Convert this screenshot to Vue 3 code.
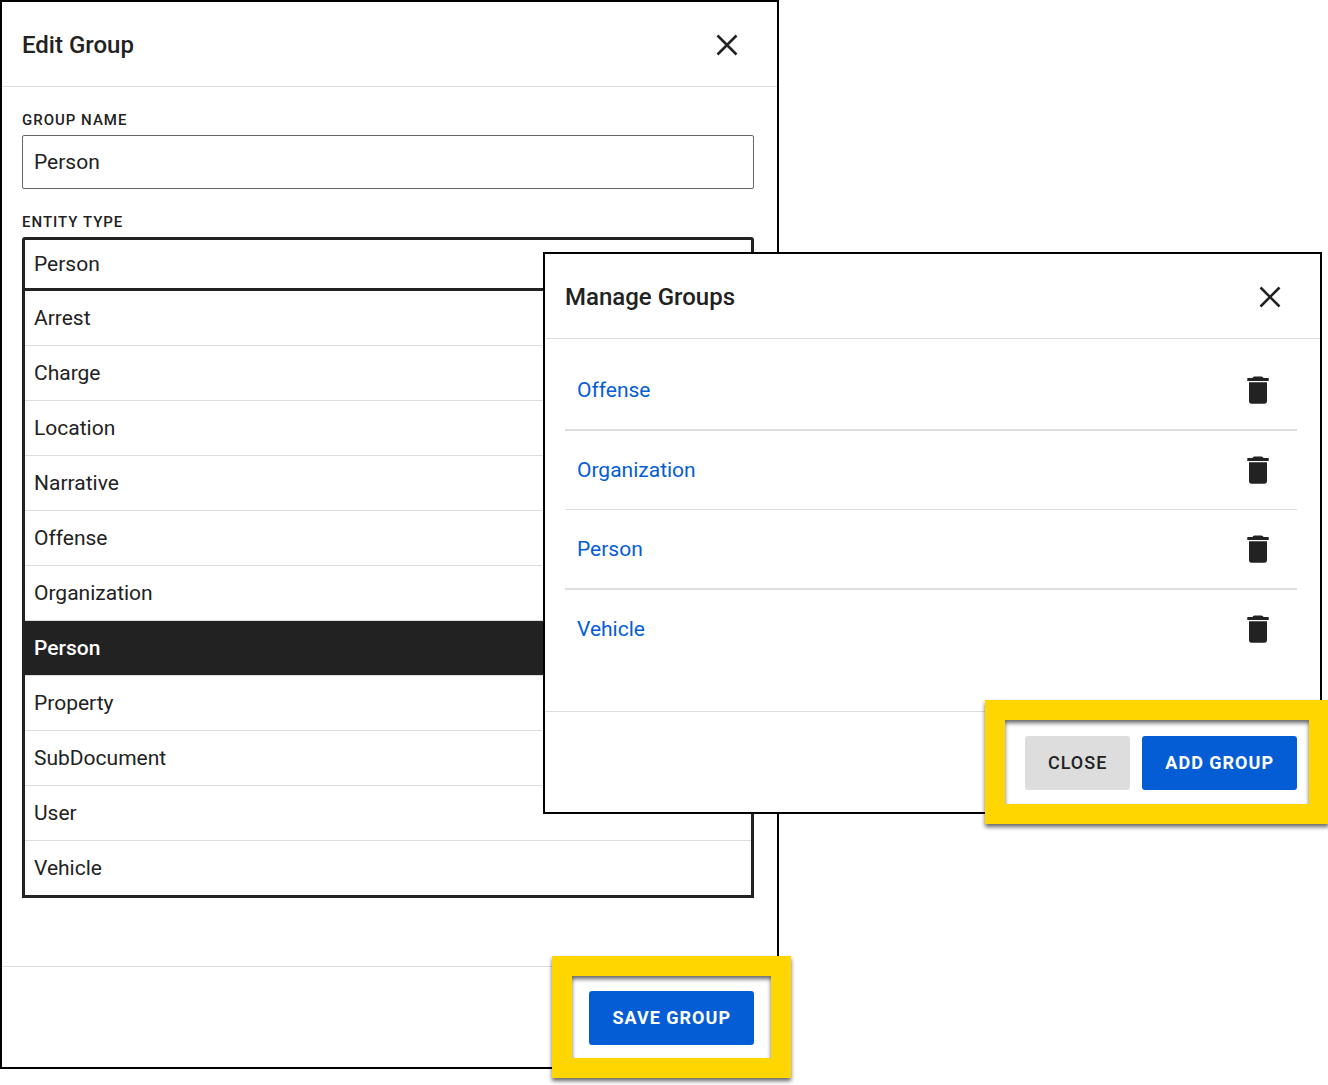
<script setup>
import { ref } from 'vue'

const groupName = ref('Person')
const entityType = ref('Person')
const entityTypes = [
  'Arrest', 'Charge', 'Location', 'Narrative', 'Offense', 'Organization',
  'Person', 'Property', 'SubDocument', 'User', 'Vehicle',
]
const groups = ['Offense', 'Organization', 'Person', 'Vehicle']
</script>

<template>
  <main class="stage">
    <section class="dialog edit" role="dialog" aria-labelledby="edit-title">
      <header class="head">
        <h2 id="edit-title">Edit Group</h2>
        <button class="icon-button" type="button" aria-label="Close">
          <svg width="22" height="22" viewBox="0 0 22 22"><path d="M1.5 1.5 20.5 20.5M20.5 1.5 1.5 20.5" /></svg>
        </button>
      </header>
      <form class="form" @submit.prevent>
        <label for="group-name">GROUP NAME</label>
        <input id="group-name" v-model="groupName" class="field" type="text" />
        <label for="entity-type">ENTITY TYPE</label>
        <select id="entity-type" v-model="entityType" class="field open">
          <option v-for="type in entityTypes" :key="type">{{ type }}</option>
        </select>
        <ul class="options">
          <li v-for="type in entityTypes" :key="type">
            <button
              type="button"
              :class="{ selected: type === entityType }"
              @click="entityType = type"
            >{{ type }}</button>
          </li>
        </ul>
      </form>
      <footer class="foot">
        <div class="actions save-actions">
          <button class="action primary" type="button">SAVE GROUP</button>
        </div>
      </footer>
    </section>

    <section class="dialog manage" role="dialog" aria-labelledby="manage-title">
      <header class="head">
        <h2 id="manage-title">Manage Groups</h2>
        <button class="icon-button" type="button" aria-label="Close">
          <svg width="22" height="22" viewBox="0 0 22 22"><path d="M1.5 1.5 20.5 20.5M20.5 1.5 1.5 20.5" /></svg>
        </button>
      </header>
      <ul class="groups">
        <li v-for="group in groups" :key="group">
          <a href="#">{{ group }}</a>
          <button class="icon-button" type="button" :aria-label="'Delete ' + group">
            <svg class="trash" width="22" height="28" viewBox="0 0 22 28">
              <path d="M6 1.2Q6.600.4 8 .4H14Q15.400.4 16 1.200L16.500 2H21.700V5H.3V2H5.500ZM2 6.300H20V25Q20 27.700 17.300 27.700H4.700Q2 27.700 2 25Z" />
            </svg>
          </button>
        </li>
      </ul>
      <footer class="foot">
        <div class="actions group-actions">
          <button class="action" type="button">CLOSE</button>
          <button class="action primary" type="button">ADD GROUP</button>
        </div>
      </footer>
    </section>
  </main>
</template>

<style>
body {
  margin: 0;
  background: #fff;
}
</style>

<style scoped>
.stage {
  position: relative;
  padding-bottom: 16px;
  overflow: hidden;
  color: #222;
  font-family: Roboto, "Liberation Sans", sans-serif;
  font-size: 21px;
}

.stage *,
.stage *::after {
  box-sizing: border-box;
}

button,
input,
select {
  color: inherit;
  font: inherit;
  letter-spacing: inherit;
}

button {
  padding: 0;
  border: 0;
  background: none;
  cursor: pointer;
}

ul {
  margin: 0;
  padding: 0;
  list-style: none;
}

.dialog {
  width: 58.66%;
  border: 2px solid #000;
  background: #fff;
}

.manage {
  position: absolute;
  top: 252px;
  right: 6px;
}

.head {
  display: flex;
  align-items: center;
  justify-content: space-between;
  height: 85px;
  padding: 2px 39px 0 20px;
  border-bottom: 1px solid #ddd;
}

h2 {
  margin: 0;
  font-size: 24px;
  font-weight: 500;
  line-height: 32px;
}

.icon-button {
  display: flex;
}

.icon-button path {
  fill: none;
  stroke: #222;
  stroke-width: 2.6;
}

.icon-button .trash path {
  fill: #222;
  stroke: none;
}

.form {
  display: flex;
  flex-direction: column;
  padding: 23px 23px 68px 20px;
}

label {
  margin-bottom: 5px;
  font-size: 15px;
  font-weight: 500;
  line-height: 20px;
  letter-spacing: 1px;
}

.field {
  width: 100%;
  height: 54px;
  margin: 0 0 23px;
  padding: 0 11px;
  border: 1px solid #666;
  border-radius: 2px;
  background: #fff;
  outline: 0;
  appearance: none;
}

.field.open {
  margin: 0;
  padding: 0 9px;
  border: 3px solid #222;
  border-radius: 3px 3px 0 0;
}

.options {
  border: 3px solid #222;
  border-top: 0;
}

.options li + li {
  border-top: 1px solid #ddd;
}

.options button {
  display: block;
  width: 100%;
  height: 54px;
  padding: 0 9px;
  text-align: left;
}

.options .selected {
  background: #222;
  color: #fff;
  font-weight: 500;
}

.groups {
  padding: 12px 23px 43px 20px;
}

.groups li {
  display: flex;
  align-items: center;
  justify-content: space-between;
  box-sizing: content-box;
  height: 78px;
  padding: 0 28px 0 12px;
  border-bottom: 1px solid #ddd;
}

.groups li:nth-child(odd) {
  border-bottom-width: 2px;
}

.groups li:last-child {
  border-bottom: 0;
}

.groups a {
  color: #055dd6;
  text-decoration: none;
}

.foot {
  display: flex;
  justify-content: flex-end;
  padding: 24px 23px 22px 20px;
  border-top: 1px solid #ddd;
}

.actions {
  position: relative;
  display: flex;
  gap: 12px;
}

/* Yellow highlight frame drawn over the footer around its buttons */
.actions::after {
  content: "";
  position: absolute;
  border: 20px solid #ffd600;
  filter: drop-shadow(0 3px 2px rgba(0, 0, 0, 0.6));
  pointer-events: none;
}

.save-actions::after {
  inset: -35px -37px -33px;
}

.group-actions::after {
  inset: -36px -32px -34px -40px;
}

.action {
  height: 54px;
  padding: 0 23px 2px;
  border-radius: 3px;
  background: #ddd;
  font-size: 18px;
  font-weight: 500;
  letter-spacing: 1px;
}

.primary {
  background: #055dd6;
  color: #fff;
  font-weight: 700;
}
</style>
